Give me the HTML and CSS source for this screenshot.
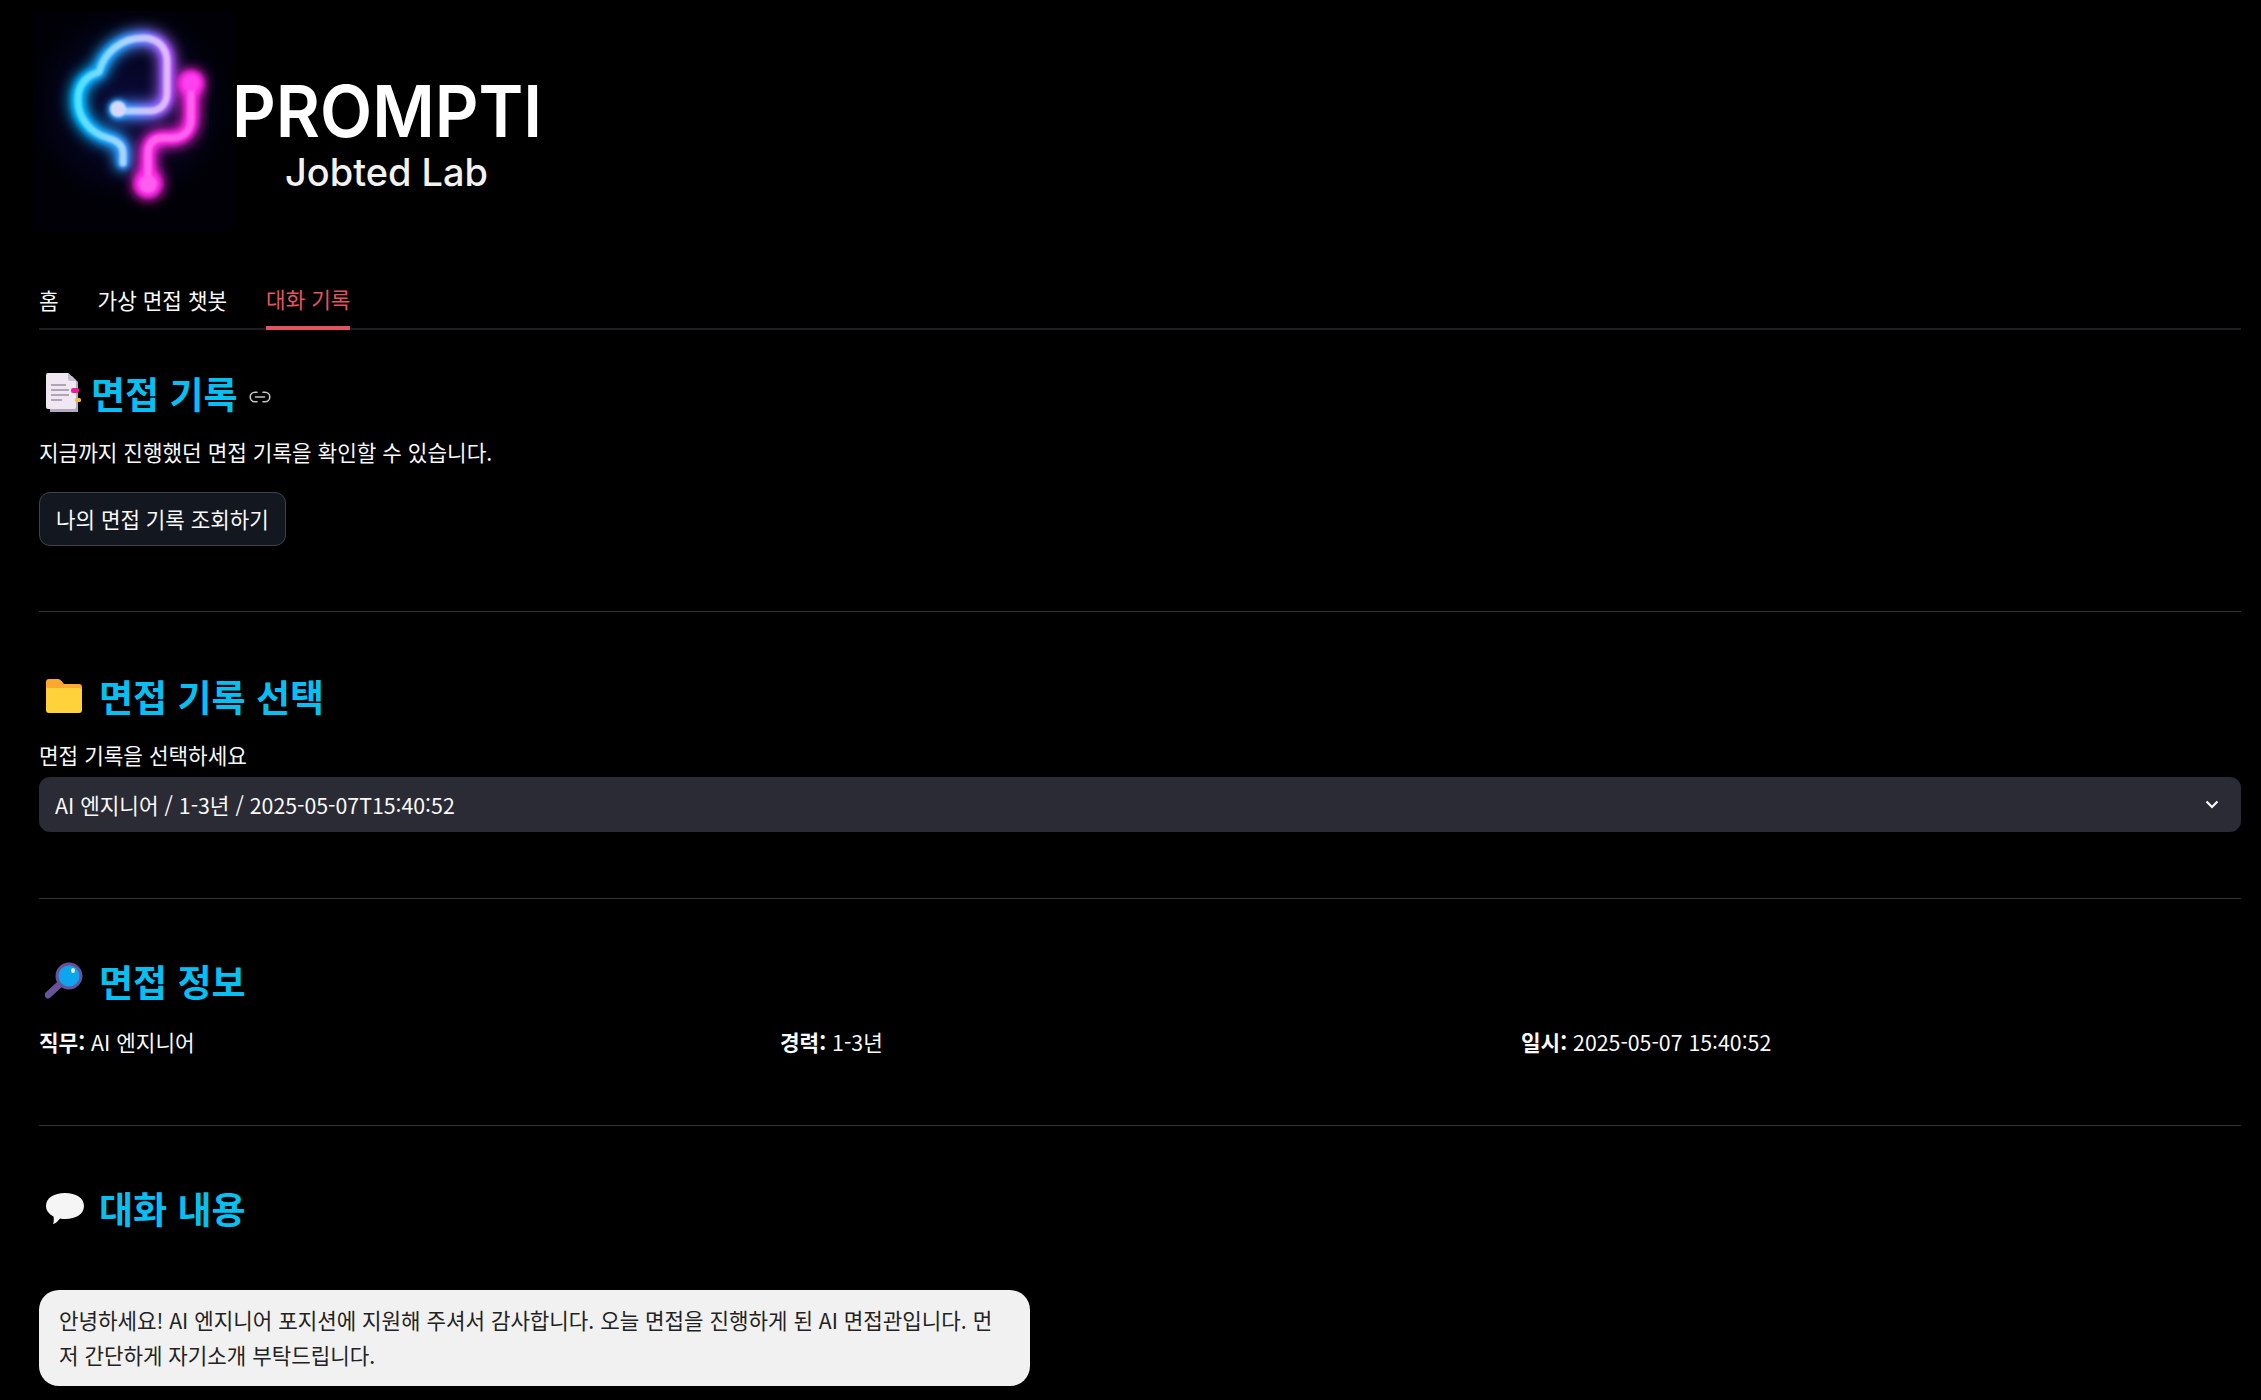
FILE: index.html
```html
<!DOCTYPE html>
<html lang="ko">
<head>
<meta charset="utf-8">
<title>면접 기록</title>
<link rel="stylesheet" href="styles.css">
</head>
<body>
<main class="page">
  <svg class="logo" width="530" height="220" viewBox="33 11 530 220" xmlns="http://www.w3.org/2000/svg" role="img" aria-label="PROMPTI Jobted Lab">
    <defs>
      <linearGradient id="tube" gradientUnits="userSpaceOnUse" x1="78" y1="90" x2="170" y2="90">
        <stop offset="0" stop-color="#00b8ff"/>
        <stop offset=".45" stop-color="#2a9cff"/>
        <stop offset="1" stop-color="#b455ff"/>
      </linearGradient>
      <linearGradient id="core" gradientUnits="userSpaceOnUse" x1="78" y1="90" x2="170" y2="90">
        <stop offset="0" stop-color="#4fe0ff"/>
        <stop offset=".5" stop-color="#a8d4ff"/>
        <stop offset="1" stop-color="#e6b4ff"/>
      </linearGradient>
      <radialGradient id="haze" gradientUnits="userSpaceOnUse" cx="130" cy="105" r="103">
        <stop offset="0" stop-color="#0a0a3a"/>
        <stop offset=".6" stop-color="#04041c"/>
        <stop offset="1" stop-color="#000006"/>
      </radialGradient>
      <filter id="wide" x="-40%" y="-40%" width="180%" height="180%"><feGaussianBlur stdDeviation="7"/></filter>
      <filter id="soft" x="-30%" y="-30%" width="160%" height="160%"><feGaussianBlur stdDeviation="2.5"/></filter>
      <filter id="tiny" x="-10%" y="-10%" width="120%" height="120%"><feGaussianBlur stdDeviation="1"/></filter>
    </defs>
    <rect x="33" y="11" width="200" height="220" fill="url(#haze)"/>
    <path class="tube-glow" stroke="url(#tube)" filter="url(#wide)" d="M123 163V153C123 144 115 140 108 138C90 133 78 118 78 100C78 85 86 76 99 72C104 52 122 38 143 38C158 38 167 48 167 62V92C167 104 160 111 149 111H118"/>
    <path class="tube-glow" stroke="#ff20e0" filter="url(#wide)" d="M191 83V118C191 131 183 138 171 138H163C153 138 148 144 148 154V183"/>
    <circle cx="191" cy="83" r="13" fill="#ff20e0" filter="url(#wide)"/>
    <circle cx="148" cy="184" r="15" fill="#ff20e0" filter="url(#wide)"/>
    <path class="tube-mid" stroke="url(#tube)" filter="url(#soft)" d="M123 163V153C123 144 115 140 108 138C90 133 78 118 78 100C78 85 86 76 99 72C104 52 122 38 143 38C158 38 167 48 167 62V92C167 104 160 111 149 111H118"/>
    <path class="tube-mid" stroke="#ff2ce8" filter="url(#soft)" d="M191 83V118C191 131 183 138 171 138H163C153 138 148 144 148 154V183"/>
    <circle cx="118" cy="109" r="10" fill="url(#tube)" filter="url(#soft)"/>
    <circle cx="191" cy="83" r="12" fill="#ff2ce8" filter="url(#soft)"/>
    <circle cx="148" cy="184" r="13" fill="#ff2ce8" filter="url(#soft)"/>
    <path class="tube-core" stroke="url(#core)" filter="url(#tiny)" d="M123 163V153C123 144 115 140 108 138C90 133 78 118 78 100C78 85 86 76 99 72C104 52 122 38 143 38C158 38 167 48 167 62V92C167 104 160 111 149 111H118"/>
    <path class="tube-core" stroke="#ff60ee" filter="url(#tiny)" d="M191 83V118C191 131 183 138 171 138H163C153 138 148 144 148 154V183"/>
    <circle cx="118" cy="109" r="8" fill="#d6d8ff" filter="url(#tiny)"/>
    <circle cx="191" cy="83" r="8" fill="#ff40ee" filter="url(#tiny)"/>
    <circle cx="148" cy="184" r="9" fill="#ff5cf0" filter="url(#tiny)"/>
    <text class="logo-title" x="232" y="137" textLength="310" lengthAdjust="spacingAndGlyphs">PROMPTI</text>
    <text class="logo-sub" x="285" y="186" textLength="203" lengthAdjust="spacingAndGlyphs">Jobted Lab</text>
  </svg>

  <nav class="tabs">
    <a class="tab">홈</a>
    <a class="tab">가상 면접 챗봇</a>
    <a class="tab tab-active">대화 기록</a>
  </nav>

  <section class="section section-first">
    <h2 class="heading">
      <svg class="emoji emoji-page" width="36" height="42" viewBox="0 0 36 42" xmlns="http://www.w3.org/2000/svg">
        <path d="M5 4H27L33 10V40H5Z" fill="#b5a9bd"/>
        <path d="M1 3Q1 1 3 1H23L31 9V35Q31 37 29 37H3Q1 37 1 35Z" fill="#efe8f3"/>
        <path d="M23 1L31 9H25Q23 9 23 7Z" fill="#c9bccf"/>
        <path d="M6 13H21M6 18H24M6 23H24M6 28H17" stroke="#9a8fa3" stroke-width="1.3" fill="none"/>
        <rect x="26" y="16" width="8" height="5" rx="2" fill="#ec1d99"/>
        <rect x="30" y="26" width="6" height="4" rx="1.5" fill="#f1bd3a"/>
      </svg>
      <span class="heading-text">면접 기록</span>
      <svg class="anchor" width="22" height="12" viewBox="0 0 22 12" xmlns="http://www.w3.org/2000/svg">
        <path d="M8 1.2H6A4.8 4.8 0 0 0 6 10.8H8M14 1.2H16A4.8 4.8 0 0 1 16 10.8H14M6.5 6H15.5" fill="none" stroke="#c4c4c4" stroke-width="1.6" stroke-linecap="round"/>
      </svg>
    </h2>
    <p class="text text-intro">지금까지 진행했던 면접 기록을 확인할 수 있습니다.</p>
    <button class="button" type="button">나의 면접 기록 조회하기</button>
  </section>

  <hr class="divider divider-one">

  <section class="section">
    <h2 class="heading">
      <svg class="emoji" width="38" height="36" viewBox="0 0 38 36" xmlns="http://www.w3.org/2000/svg">
        <path d="M1 4Q1 1 4 1H13Q15 1 16.5 3L19 6H34Q37 6 37 9V16H1Z" fill="#ffa92e"/>
        <path d="M1 10H34Q37 10 37 13V32Q37 35 34 35H4Q1 35 1 32Z" fill="#ffd23c"/>
      </svg>
      <span class="heading-text">면접 기록 선택</span>
    </h2>
    <label class="text field-label">면접 기록을 선택하세요</label>
    <div class="select">
      <span class="select-value">AI 엔지니어 / 1-3년 / 2025-05-07T15:40:52</span>
      <svg class="chevron" width="14" height="9" viewBox="0 0 14 9" xmlns="http://www.w3.org/2000/svg">
        <path d="M1.500 1.500L7 7L12.500 1.500" fill="none" stroke="#fafafa" stroke-width="2.200"/>
      </svg>
    </div>
  </section>

  <hr class="divider divider-two">

  <section class="section">
    <h2 class="heading">
      <svg class="emoji" width="38" height="38" viewBox="0 0 38 38" xmlns="http://www.w3.org/2000/svg">
        <path d="M15 22L3 33" stroke="#67529c" stroke-width="7" stroke-linecap="round"/>
        <circle cx="24" cy="14" r="13.5" fill="#67529c"/>
        <circle cx="24" cy="14" r="10.5" fill="#0ea5ee"/>
        <ellipse cx="28" cy="8.5" rx="2" ry="2.5" fill="#e6f6ff"/>
      </svg>
      <span class="heading-text">면접 정보</span>
    </h2>
    <div class="info">
      <p class="text"><strong>직무:</strong> AI 엔지니어</p>
      <p class="text"><strong>경력:</strong> 1-3년</p>
      <p class="text"><strong>일시:</strong> 2025-05-07 15:40:52</p>
    </div>
  </section>

  <hr class="divider divider-three">

  <section class="section">
    <h2 class="heading">
      <svg class="emoji emoji-chat" width="40" height="33" viewBox="0 0 40 33" xmlns="http://www.w3.org/2000/svg">
        <path d="M20 1C31 1 39 6 39 14C39 22 31 27 20 27C18 27 17 27 15 26.500C13 29 11 31.500 8 32C9 29.500 9 27 8.500 24.500C4 22 1 18.500 1 14C1 6 9 1 20 1Z" fill="#f5f5f5"/>
      </svg>
      <span class="heading-text">대화 내용</span>
    </h2>
    <div class="bubble">안녕하세요! AI 엔지니어 포지션에 지원해 주셔서 감사합니다. 오늘 면접을 진행하게 된 AI 면접관입니다. 먼저 간단하게 자기소개 부탁드립니다.</div>
  </section>
</main>
</body>
</html>
```
FILE: styles.css
```css
* { box-sizing: border-box; }
html, body { margin: 0; padding: 0; height: 1400px; overflow: hidden; background: #000; }
body { font-family: "Noto Sans CJK KR", "Noto Sans", sans-serif; color: #fafafa; font-size: 21.3px; font-variant-ligatures: no-contextual; font-feature-settings: "calt" 0; }
.page { padding: 11px 20px 0 39px; }
.logo { display: block; margin-left: -6px; }
.tube-glow { fill: none; stroke-width: 17; stroke-linecap: round; stroke-linejoin: round; }
.tube-mid { fill: none; stroke-width: 12; stroke-linecap: round; stroke-linejoin: round; }
.tube-core { fill: none; stroke-width: 7; stroke-linecap: round; stroke-linejoin: round; }
.logo-title { font-family: "Inter", sans-serif; font-size: 72px; font-weight: 600; fill: #fff; }
.logo-sub { font-family: "Inter", sans-serif; font-size: 38px; font-weight: 500; fill: #f2f2f2; }
.tabs { display: flex; gap: 39px; margin-top: 44px; height: 55px; border-bottom: 2px solid #1e1e24; }
.tab { display: block; height: 55px; padding-top: 7px; line-height: 36px; color: #fafafa; }
.tab-active { padding-top: 6px; color: #e0555f; border-bottom: 4px solid #e0555f; }
.section { display: block; }
.section-first { margin-top: 36px; }
.heading { display: flex; align-items: center; gap: 0; margin: 0; height: 54px; font-size: 37px; font-weight: 700; color: #08bff2; }
.emoji { margin-left: 6px; margin-right: 16px; flex: none; }
.emoji-page { margin-right: 10px; }
.emoji-chat { margin-right: 14px; }
.anchor { margin-left: 11px; margin-top: 8px; }
.text { margin: 0; line-height: 36px; }
.text strong { font-weight: 700; }
.text-intro { margin-top: 14px; }
.button { display: block; margin-top: 22px; height: 54px; padding: 0 16px 2px; font: inherit; font-size: 21.2px; color: #fafafa; background: #131720; border: 1px solid #3f424d; border-radius: 11px; }
.divider { border: 0; border-top: 1px solid #333; margin: 0; }
.divider-one { margin-top: 65px; margin-bottom: 57px; }
.divider-two { margin-top: 66px; margin-bottom: 55px; }
.divider-three { margin-top: 65px; margin-bottom: 55px; }
.field-label { display: block; margin-top: 14px; }
.select { display: flex; align-items: center; justify-content: space-between; margin-top: 4px; height: 55px; padding: 0 22px 0 16px; background: #2a2b35; border-radius: 11px; }
.info { display: grid; grid-template-columns: repeat(3, 1fr); gap: 21px; margin-top: 16px; }
.bubble { margin-top: 55px; width: 991px; padding: 12px 20px 14px; line-height: 35px; font-size: 21.2px; color: #222; background: #f1f1f1; border-radius: 20px; }
```
